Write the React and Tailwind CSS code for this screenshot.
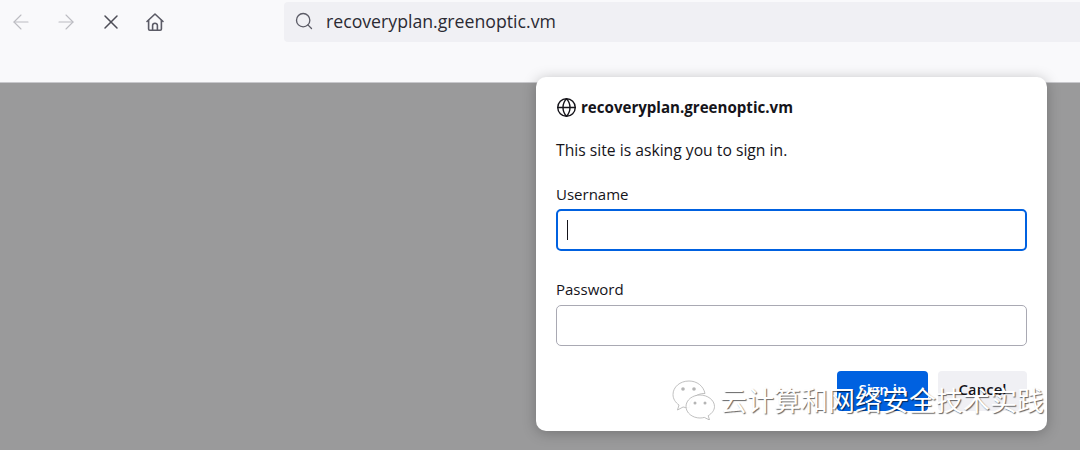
import { ArrowLeft, ArrowRight, X, Search, Globe } from 'lucide-react';

const HomeIcon = () => (
  <svg width="20" height="20" viewBox="0 0 20 20" fill="none" stroke="#5b5b66" strokeWidth="1.6" strokeLinejoin="round" strokeLinecap="round">
    <path d="M2 9.500 10 2l8 7.500" />
    <path d="M3.600 8.500V17a1.200 1.200 0 0 0 1.200 1.200h10.400a1.200 1.200 0 0 0 1.200-1.200V8.500" />
    <path d="M7.600 18v-4.400a2.400 2.400 0 0 1 4.800 0V18" />
  </svg>
);

const WeChatIcon = () => (
  <svg width="44" height="40" viewBox="0 0 44 40">
    <g fill="#ffffff" fillOpacity="0.9" stroke="#b0b0b0" strokeWidth="0.8">
      <path d="M17 1C8 1 1 7 1 14.500c0 4.300 2.400 8 6 10.500L5.500 30l5.600-3c1.600.5 3.200.7 5 .7h1.500C17 20 24 13 33 13.500 31.500 6 25 1 17 1z" />
      <path d="M28 15c-7.500 0-14 5-14 11.500S20.500 38 28 38c1.500 0 3-.2 4.300-.6L37.500 40l-1.300-4.300c3.800-2.300 6.300-5.600 6.300-9.200C42.500 20 35.500 15 28 15z" />
    </g>
    <g fill="#b5b5b5">
      <circle cx="11" cy="9" r="1.800" />
      <circle cx="22" cy="9" r="1.800" />
      <circle cx="23" cy="23" r="1.500" />
      <circle cx="33" cy="23" r="1.500" />
    </g>
  </svg>
);

export default function App() {
  return (
    <div className="relative w-[1080px] h-[450px] overflow-hidden bg-[#9a9a9b] font-['Open_Sans','Noto_Sans',sans-serif]">
      <header className="h-[83px] bg-[#f9f9fb] border-b border-[#c8c8cc] pt-[1px]">
        <div className="flex items-center h-[41px]">
          <div className="flex items-center pl-[9px]">
            <ArrowLeft size={24} strokeWidth={1.1} color="#bcbcc2" />
            <ArrowRight size={24} strokeWidth={1.1} color="#bcbcc2" className="ml-[21px]" />
            <X size={24} strokeWidth={1.5} color="#4d4d57" className="ml-[21px]" />
            <div className="ml-[22px]">
              <HomeIcon />
            </div>
          </div>
          <div className="ml-[119px] mt-[1px] pb-[2px] flex-1 h-[40px] bg-[#f0f0f4] rounded-l-[4px] flex items-center pl-[10px]">
            <Search size={20} strokeWidth={1.6} color="#5b5b66" />
            <span className="ml-[12px] text-[17.7px] text-[#2b2a33]">recoveryplan.greenoptic.vm</span>
          </div>
        </div>
      </header>

      <div className="absolute left-[536px] top-[77px] w-[511px] h-[354px] bg-white rounded-[10px] shadow-[0_2px_14px_rgba(0,0,0,0.25)] pt-[20px] px-[20px]">
        <div className="flex items-center gap-[4px] h-[20px]">
          <Globe size={21} strokeWidth={1.6} color="#15141a" />
          <span className="text-[15.1px] font-bold text-[#15141a]">recoveryplan.greenoptic.vm</span>
        </div>
        <p className="mt-[22px] text-[15.7px] leading-[22px] text-[#15141a]">This site is asking you to sign in.</p>
        <label className="block mt-[22px] text-[15px] leading-[22px] text-[#15141a]">Username</label>
        <div className="mt-[4px] h-[42px] rounded-[5px] border-2 border-[#0061e0] flex items-center pl-[9px]">
          <span className="w-px h-[20px] bg-[#15141a]" />
        </div>
        <label className="block mt-[27px] text-[15px] leading-[22px] text-[#15141a]">Password</label>
        <div className="mt-[5px] h-[41px] rounded-[5px] border border-[#a9a9b3]" />
        <div className="mt-[25px] flex justify-end gap-[10px]">
          <button className="w-[91px] h-[40px] rounded-[4px] bg-[#0061e0] text-white text-[15px] font-semibold pb-[4px]">Sign in</button>
          <button className="w-[89px] h-[40px] rounded-[4px] bg-[#f0f0f4] text-[#15141a] text-[15px] font-semibold pb-[4px]">Cancel</button>
        </div>
      </div>

      <div className="absolute left-[672px] top-[380px] flex items-center gap-[4px]">
        <WeChatIcon />
        <span className="text-[27px] leading-[32px] text-white font-['Noto_Sans_CJK_SC',sans-serif] [text-shadow:1px_1px_1px_rgba(0,0,0,0.6)] whitespace-nowrap">云计算和网络安全技术实践</span>
      </div>
    </div>
  );
}
